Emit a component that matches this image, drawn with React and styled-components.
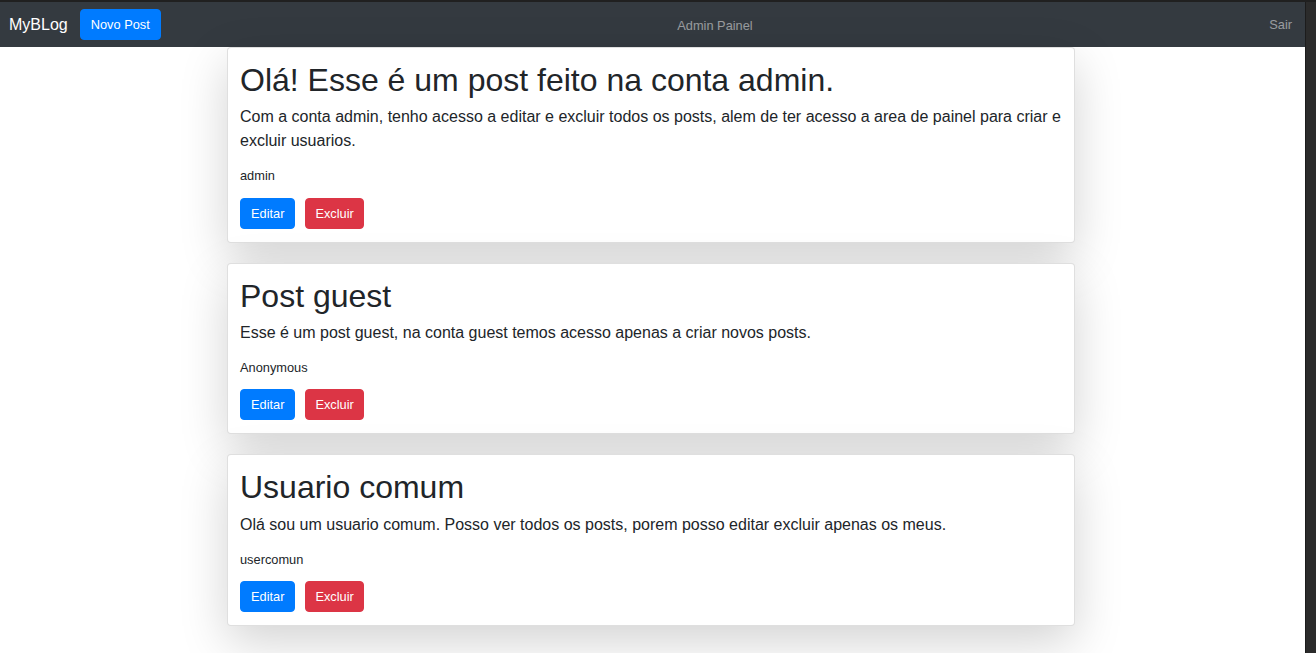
import React from 'react';
import styled, { createGlobalStyle } from 'styled-components';

const GlobalStyle = createGlobalStyle`
  html, body {
    margin: 0;
    padding: 0;
    height: 100%;
    overflow: hidden;
  }
  body {
    font-family: "Liberation Sans", Arial, Helvetica, sans-serif;
    color: #212529;
    background: #fff;
  }
  * { box-sizing: border-box; }
`;

const posts = [
  {
    id: 1,
    title: 'Olá! Esse é um post feito na conta admin.',
    content:
      'Com a conta admin, tenho acesso a editar e excluir todos os posts, alem de ter acesso a area de painel para criar e excluir usuarios.',
    author: 'admin',
  },
  {
    id: 2,
    title: 'Post guest',
    content: 'Esse é um post guest, na conta guest temos acesso apenas a criar novos posts.',
    author: 'Anonymous',
  },
  {
    id: 3,
    title: 'Usuario comum',
    content:
      'Olá sou um usuario comum. Posso ver todos os posts, porem posso editar excluir apenas os meus.',
    author: 'usercomun',
  },
];

const App = () => {
  return (
    <>
      <GlobalStyle />
      <Frame>
        <Page>
          <Navbar>
            <Brand>MyBLog</Brand>
            <Button variant="primary">Novo Post</Button>
            <NavCenter>
              <NavLink>Admin Painel</NavLink>
            </NavCenter>
            <NavLink>Sair</NavLink>
          </Navbar>
          <Main>
            <Feed>
              {posts.map((post) => (
                <Card key={post.id}>
                  <Title>{post.title}</Title>
                  <Content>{post.content}</Content>
                  <Author>{post.author}</Author>
                  <Actions>
                    <Button variant="primary">Editar</Button>
                    <Button variant="danger">Excluir</Button>
                  </Actions>
                </Card>
              ))}
            </Feed>
          </Main>
        </Page>
        <ScrollTrack />
      </Frame>
    </>
  );
};

export default App;

const Frame = styled.div`
  display: grid;
  grid-template-columns: 1fr 11px;
  height: 100vh;
  border-top: 2px solid #202020;
  background: #fff;
`;

const Page = styled.div`
  overflow: hidden;
  min-width: 0;
`;

const ScrollTrack = styled.div`
  background: #2b2b2b;
  border-left: 1px solid #1c1c1c;
`;

const Navbar = styled.nav`
  display: flex;
  align-items: center;
  height: 45px;
  padding: 0 13px 0 9px;
  background: #343a40;
`;

const Brand = styled.span`
  font-size: 16px;
  color: #fff;
  margin-right: 12px;
  white-space: nowrap;
`;

const NavCenter = styled.div`
  flex: 1;
  text-align: center;
`;

const NavLink = styled.span`
  font-size: 12.8px;
  color: rgba(255, 255, 255, 0.5);
`;

const Button = styled.button`
  display: inline-flex;
  align-items: center;
  height: 31px;
  padding: 0 ${(p) => (p.variant === 'danger' ? '9px' : '10px')};
  font-family: inherit;
  font-size: 12.8px;
  color: #fff;
  border: 1px solid ${(p) => (p.variant === 'danger' ? '#dc3545' : '#007bff')};
  background: ${(p) => (p.variant === 'danger' ? '#dc3545' : '#007bff')};
  border-radius: 4px;
  cursor: pointer;
`;

const Main = styled.main`
  padding-right: 3px;
`;

const Feed = styled.div`
  width: 848px;
  margin: 0 auto;
  display: flex;
  flex-direction: column;
  gap: 20px;
`;

const Card = styled.article`
  background: #fff;
  border: 1px solid rgba(0, 0, 0, 0.125);
  border-radius: 4px;
  padding: 12px 12px 13px;
  box-shadow: 0 16px 48px rgba(0, 0, 0, 0.175);
`;

const Title = styled.h2`
  margin: 1px 0 6px;
  font-size: 32px;
  font-weight: 400;
  line-height: 1.2;
`;

const Content = styled.p`
  margin: 0;
  font-size: 16px;
  line-height: 24px;
`;

const Author = styled.div`
  margin-top: 13px;
  font-size: 12.8px;
  line-height: 19.2px;
`;

const Actions = styled.div`
  display: flex;
  gap: 10px;
  margin-top: 12px;
`;
